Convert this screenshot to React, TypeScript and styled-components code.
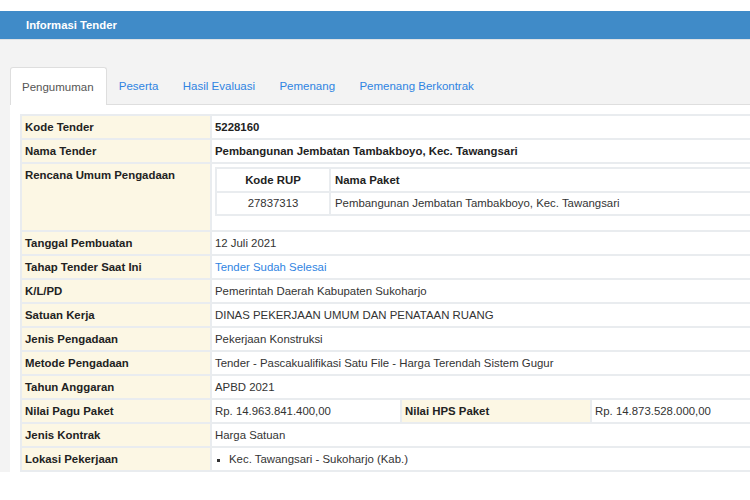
import React from 'react';
import styled, { createGlobalStyle } from 'styled-components';

const GlobalStyle = createGlobalStyle`
  html, body { margin: 0; padding: 0; background: #fff; }
  body {
    font-family: "Liberation Sans", Arial, Helvetica, sans-serif;
    font-size: 11.4px;
    color: #333;
  }
`;

const Page = styled.div`
  width: 750px;
  height: 500px;
  overflow: hidden;
  padding-top: 11px;
  box-sizing: border-box;
`;

const Header = styled.div`
  width: 1000px;
  height: 29px;
  box-sizing: border-box;
  background: #408bc8;
  border-bottom: 1px solid #dfe2e5;
  display: flex;
  align-items: center;
  padding-left: 26px;
  color: #fff;
  font-weight: bold;
  font-size: 11.3px;
`;

const Section = styled.div`
  width: 1000px;
  background: #f3f3f3;
  padding: 27px 0 0 10px;
  box-sizing: border-box;
`;

const TabBar = styled.ul`
  display: flex;
  list-style: none;
  margin: 0;
  padding: 0;
  height: 37px;
  border-bottom: 1px solid #dedede;
`;

const Tab = styled.li<{ $active?: boolean }>`
  padding: ${p => (p.$active ? '0 12px 0 11px' : '0 11.2px')};
  box-sizing: border-box;
  display: flex;
  align-items: center;
  font-size: 11.5px;
  color: ${p => (p.$active ? '#555' : '#2f84e2')};
  background: ${p => (p.$active ? '#fff' : 'transparent')};
  border: 1px solid ${p => (p.$active ? '#dedede' : 'transparent')};
  border-bottom: none;
  border-radius: 3px 3px 0 0;
  margin-bottom: ${p => (p.$active ? '-1px' : '0')};
  height: ${p => (p.$active ? '38px' : '37px')};
`;

const Panel = styled.div`
  background: #fff;
  padding: 9px 0 0 10px;
`;

const InfoTable = styled.table`
  border-collapse: collapse;
  table-layout: fixed;
  width: 980px;
`;

const Label = styled.th`
  background: #fcf7e4;
  font-weight: bold;
  text-align: left;
  vertical-align: top;
  color: #222;
  border: 2px solid #e9ecef;
  padding: 5px 3px 4px 3px;
  height: 13px;
  line-height: 13px;
`;

const Value = styled.td<{ $bold?: boolean }>`
  background: #fff;
  text-align: left;
  vertical-align: top;
  font-weight: ${p => (p.$bold ? 'bold' : 'normal')};
  color: ${p => (p.$bold ? '#222' : '#333')};
  border: 2px solid #e9ecef;
  padding: 5px 3px 4px 3px;
  height: 13px;
  line-height: 13px;
`;

const NestedCell = styled.td`
  background: #fff;
  vertical-align: top;
  border: 2px solid #e9ecef;
  padding: 3px 0 14px 3px;
`;

const RupTable = styled.table`
  border-collapse: collapse;
  table-layout: fixed;
  width: 100%;
`;

const RupHead = styled.th<{ $center?: boolean }>`
  font-weight: bold;
  color: #222;
  text-align: ${p => (p.$center ? 'center' : 'left')};
  border: 2px solid #e9ecef;
  padding: 5px 4px 4px 4px;
  height: 13px;
  line-height: 13px;
`;

const RupCell = styled.td<{ $center?: boolean }>`
  text-align: ${p => (p.$center ? 'center' : 'left')};
  border: 2px solid #e9ecef;
  padding: 4px 4px 4px 4px;
  height: 13px;
  line-height: 13px;
`;

const Link = styled.a`
  color: #2f84e2;
  text-decoration: none;
`;

const BulletList = styled.ul`
  margin: 0;
  padding: 0 0 0 14px;
  list-style: square;
  li::marker { font-size: 9px; }
`;

const rows: Array<[string, React.ReactNode]> = [
  ['Tanggal Pembuatan', '12 Juli 2021'],
  ['Tahap Tender Saat Ini', <Link href="#">Tender Sudah Selesai</Link>],
  ['K/L/PD', 'Pemerintah Daerah Kabupaten Sukoharjo'],
  ['Satuan Kerja', 'DINAS PEKERJAAN UMUM DAN PENATAAN RUANG'],
  ['Jenis Pengadaan', 'Pekerjaan Konstruksi'],
  ['Metode Pengadaan', 'Tender - Pascakualifikasi Satu File - Harga Terendah Sistem Gugur'],
  ['Tahun Anggaran', 'APBD 2021'],
];

const tabs = ['Pengumuman', 'Peserta', 'Hasil Evaluasi', 'Pemenang', 'Pemenang Berkontrak'];

export default function App() {
  return (
    <>
      <GlobalStyle />
      <Page>
        <Header>Informasi Tender</Header>
        <Section>
          <TabBar>
            {tabs.map((t, i) => (
              <Tab key={t} $active={i === 0}>{t}</Tab>
            ))}
          </TabBar>
          <Panel>
            <InfoTable>
              <colgroup>
                <col style={{ width: 190 }} />
                <col style={{ width: 190 }} />
                <col style={{ width: 190 }} />
                <col />
              </colgroup>
              <tbody>
                <tr>
                  <Label>Kode Tender</Label>
                  <Value $bold colSpan={3}>5228160</Value>
                </tr>
                <tr>
                  <Label>Nama Tender</Label>
                  <Value $bold colSpan={3}>Pembangunan Jembatan Tambakboyo, Kec. Tawangsari</Value>
                </tr>
                <tr>
                  <Label>Rencana Umum Pengadaan</Label>
                  <NestedCell colSpan={3}>
                    <RupTable>
                      <colgroup>
                        <col style={{ width: 114 }} />
                        <col />
                      </colgroup>
                      <tbody>
                        <tr>
                          <RupHead $center>Kode RUP</RupHead>
                          <RupHead>Nama Paket</RupHead>
                        </tr>
                        <tr>
                          <RupCell $center>27837313</RupCell>
                          <RupCell>Pembangunan Jembatan Tambakboyo, Kec. Tawangsari</RupCell>
                        </tr>
                      </tbody>
                    </RupTable>
                  </NestedCell>
                </tr>
                {rows.map(([l, v]) => (
                  <tr key={l}>
                    <Label>{l}</Label>
                    <Value colSpan={3}>{v}</Value>
                  </tr>
                ))}
                <tr>
                  <Label>Nilai Pagu Paket</Label>
                  <Value>Rp. 14.963.841.400,00</Value>
                  <Label>Nilai HPS Paket</Label>
                  <Value>Rp. 14.873.528.000,00</Value>
                </tr>
                <tr>
                  <Label>Jenis Kontrak</Label>
                  <Value colSpan={3}>Harga Satuan</Value>
                </tr>
                <tr>
                  <Label>Lokasi Pekerjaan</Label>
                  <Value colSpan={3}>
                    <BulletList>
                      <li>Kec. Tawangsari - Sukoharjo (Kab.)</li>
                    </BulletList>
                  </Value>
                </tr>
              </tbody>
            </InfoTable>
          </Panel>
        </Section>
      </Page>
    </>
  );
}
